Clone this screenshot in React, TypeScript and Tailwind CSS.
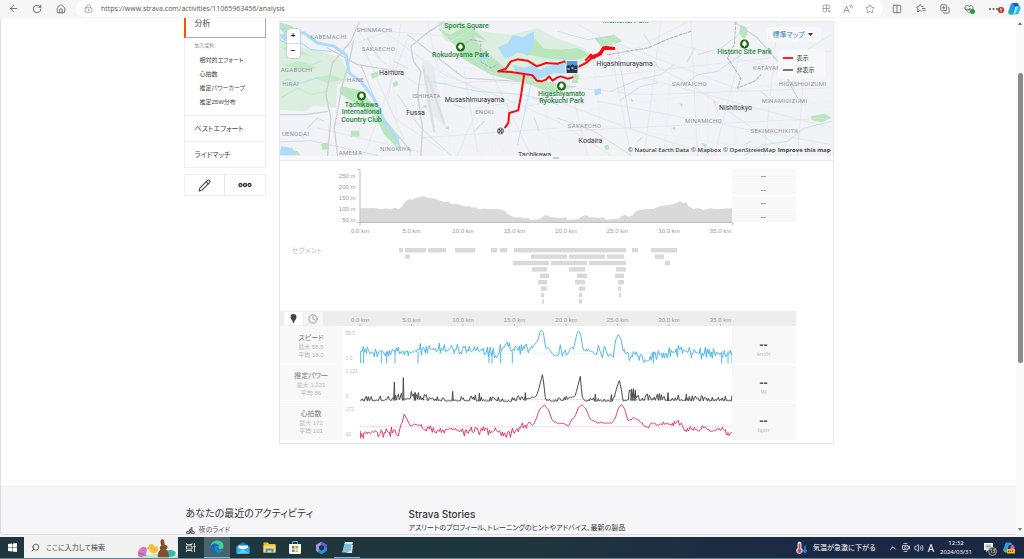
import type { ReactNode } from "react";
import { ArrowLeft, Bike, ChevronUp, Clock, Columns2, CopyPlus, Grid2x2Plus, HeartPulse, House, LockKeyhole, Pencil, RotateCw, Search, Star, Volume2 } from "lucide-react";

type Point = [x: number, y: number, noise?: number];

const kmTicks = [0, 5, 10, 15, 20, 25, 30, 35];

const elevation =
  "247,145 290,144 305,148 325,145 332,148 352,144 362,147 373,139 382,124 390,120 396,116 402,120 412,114 425,111 438,108 447,113 462,115 480,119 490,123 500,127 510,125 520,132 535,131 550,136 565,140 575,138 582,143 592,142 602,148 620,146 640,148 660,147 680,152 690,163 705,171 720,172 728,171 738,176 748,172 757,180 786,177 796,169 806,165 816,171 836,173 856,173 864,172 869,179 901,177 914,168 924,165 934,172 966,173 976,172 983,179 1021,176 1031,168 1041,164 1051,170 1064,165 1074,153 1096,148 1126,147 1146,139 1186,133 1206,124 1216,129 1226,127 1231,138 1246,147 1261,144 1276,150 1296,145 1316,148 1362,144";

// [start, end] of every segment, one list per lane
const segments = [
  [[39, 43], [45, 66], [68, 86], [95, 115], [131, 137], [140, 147], [154, 266], [272, 278], [291, 317]],
  [[45, 50], [171, 207], [209, 245], [247, 264], [295, 304]],
  [[153, 189], [191, 227], [229, 266], [305, 310]],
  [[172, 187], [209, 225], [256, 266]],
  [[180, 189], [217, 227], [255, 264]],
  [[178, 187], [215, 225], [258, 264]],
  [[181, 187], [219, 225], [258, 261]],
  [[181, 184], [219, 222], [259, 261]],
  [[182, 184], [219, 222]],
];

const speed: Point[] = [
  [247, 132, 10], [400, 130, 9], [440, 122, 11], [550, 125, 9], [610, 128, 6], [640, 136, 12], [665, 132, 14], [685, 106, 4], [700, 130, 12],
  [740, 122, 8], [750, 126, 12], [765, 115, 3], [780, 98, 1], [785, 75, 1], [790, 66, 0], [796, 74, 0], [803, 120, 2], [812, 120, 2], [826, 141, 3],
  [841, 143, 2], [847, 110, 0], [853, 142, 2], [862, 125, 1], [866, 142, 3], [876, 125, 3], [888, 118, 2], [896, 80, 1], [902, 67, 0], [908, 80, 0],
  [916, 130, 2], [928, 124, 3], [946, 138, 3], [956, 140, 2], [961, 112, 1], [973, 150, 3], [979, 115, 1], [988, 138, 4], [1006, 140, 8], [1013, 95, 1],
  [1021, 80, 0], [1030, 95, 1], [1035, 130, 2], [1046, 128, 6], [1056, 148, 12], [1073, 132, 14], [1091, 148, 9], [1126, 145, 9], [1156, 137, 8],
  [1181, 135, 12], [1216, 125, 9], [1246, 136, 12], [1316, 134, 9], [1363, 140, 7],
];
const speedDips = [248, 257, 310, 326, 351, 420, 633, 642, 668, 703, 1126, 1331, 1350, 1362];

const power: Point[] = [
  [247, 276, 14], [350, 274, 14], [400, 268, 18], [440, 274, 16], [500, 276, 12], [560, 275, 17], [640, 276, 12], [700, 277, 10], [735, 272, 18],
  [765, 266, 4], [775, 262, 4], [783, 238, 0], [794, 193, 0], [798, 232, 0], [803, 274, 2], [830, 277, 8], [860, 274, 10], [891, 262, 3], [896, 245, 1],
  [907, 202, 0], [912, 262, 0], [920, 276, 2], [945, 276, 12], [1006, 277, 10], [1012, 252, 1], [1019, 228, 0], [1024, 215, 0], [1029, 235, 0],
  [1035, 276, 1], [1052, 277, 8], [1055, 266, 36], [1076, 266, 32], [1080, 274, 16], [1180, 274, 18], [1250, 276, 14], [1363, 275, 14],
];
const powerPeaks: Record<number, number> = { 349: 222, 376: 209, 411: 253, 524: 250, 604: 256, 742: 254, 952: 258, 1000: 260, 1060: 244, 1066: 242, 1072: 246, 1170: 254, 1225: 258, 1362: 264 };

const heart: Point[] = [
  [247, 372, 16], [255, 382, 8], [262, 371, 8], [340, 372, 10], [355, 370, 6], [360, 390, 1], [368, 350, 2], [374, 340, 1], [378, 315, 0], [390, 340, 2],
  [400, 352, 3], [415, 347, 3], [428, 350, 3], [435, 362, 6], [460, 362, 8], [470, 372, 8], [520, 360, 9], [560, 372, 8], [600, 370, 10], [620, 365, 10],
  [680, 375, 8], [700, 375, 8], [730, 352, 8], [745, 350, 7], [756, 340, 2], [765, 353, 3], [775, 330, 2], [785, 302, 1], [799, 290, 0], [812, 305, 0],
  [822, 335, 1], [836, 345, 3], [864, 346, 4], [869, 357, 2], [878, 338, 2], [891, 325, 1], [901, 298, 0], [912, 290, 0], [923, 300, 0], [936, 332, 1],
  [956, 342, 2], [1001, 345, 2], [1011, 332, 1], [1021, 300, 0], [1031, 288, 0], [1040, 302, 0], [1050, 338, 2], [1066, 328, 2], [1081, 335, 4],
  [1096, 350, 4], [1111, 358, 3], [1121, 342, 3], [1141, 350, 5], [1206, 342, 5], [1221, 365, 4], [1246, 362, 7], [1270, 367, 4], [1275, 350, 4],
  [1296, 370, 4], [1331, 362, 4], [1351, 374, 6], [1363, 372, 5],
];

function wobble(n: number) {
  const v = Math.sin(n * 127.1) * 43758.5453;
  return (v - Math.floor(v)) * 2 - 1;
}

function trace(points: Point[], kind: "both" | "up", seed: number) {
  const out: string[] = [];
  let i = 0;
  for (let x = points[0][0]; x <= 1363; x += 3) {
    while (i < points.length - 2 && points[i + 1][0] < x) i++;
    const [x0, y0, n0 = 0] = points[i];
    const [x1, y1, n1 = 0] = points[i + 1];
    const t = (x - x0) / (x1 - x0);
    const w = wobble(x + seed);
    const noise = n0 + (n1 - n0) * t;
    const offset = kind === "up" ? -Math.max(0, w) * noise * 1.2 + 3 : w * Math.abs(w) * noise * 1.8;
    out.push(`${x},${(y0 + (y1 - y0) * t + offset).toFixed(1)}`);
  }
  return out.join(" ");
}

const charts = [
  { name: "スピード", max: "最大 55.5", avg: "平均 18.0", top: "55.5", bottom: "0.0", unit: "km/h", color: "#52b7e8", box: "246 57 1116 111", mean: 136, line: trace(speed, "both", 3), spikes: speedDips.map((x) => `M${x} 130V166`).join("") },
  { name: "推定パワー", max: "最大 1,221", avg: "平均 86", top: "1,221", bottom: "0", unit: "W", color: "#4a4a4a", box: "246 171 1116 111", mean: 275, line: trace(power, "up", 11), spikes: Object.entries(powerPeaks).map(([x, y]) => `M${Number(x) - 2} 278L${x} ${y}L${Number(x) + 2} 278`).join("") },
  { name: "心拍数", max: "最大 172", avg: "平均 101", top: "172", bottom: "60", unit: "bpm", color: "#e6396f", box: "246 284 1116 111", mean: 355, line: trace(heart, "both", 7), spikes: "M247 368V390M256 375V391M1350 370V381" },
];

const districts: [string, number, number][] = [
  ["SHINMACHI", 95, 10], ["KABEMACHI", 49, 17], ["SAKAECHO", 99, 29], ["AGABUCHI", 17, 50], ["HIRAI", 11, 64], ["HANE", 76, 60],
  ["ISHIHATA", 147, 76], ["ENOKI", 205, 92], ["UENODAI", 16, 114], ["NINOMIYA", 116, 129], ["AMEMA", 71, 133], ["SAIWAICHO", 410, 64],
  ["KATAYAMA", 490, 48], ["HIGASHIOIZUMI", 523, 64], ["MINAMIOIZUMI", 505, 81], ["MINAMICHO", 424, 101], ["SAKAECHO", 305, 106], ["SEKIMACHIKITA", 495, 111],
];
const cities: [string, number, number][] = [
  ["Hamura", 112, 53], ["Musashimurayama", 195, 80], ["Fussa", 136, 93], ["Higashimurayama", 345, 44], ["Nishitokyo", 456, 88], ["Kodaira", 311, 121], ["Tachikawa", 255, 135],
];
const parks: [string, number, number][] = [
  ["Sports Square", 187, 6], ["Rokudoyama Park", 181, 35], ["Tachikawa", 82, 85], ["International", 82, 92], ["Country Club", 82, 100],
  ["Higashiyamato", 282, 74], ["Ryokuchi Park", 282, 81], ["Historic Site Park", 465, 32], ["Memorial Park", 346, 1],
];
const trees = [[82, 74], [181, 25], [282, 64], [465, 22]];

function RideMap() {
  return (
    <svg viewBox="0 0 554 134" preserveAspectRatio="xMidYMid slice" className="block h-[134px] w-full bg-[#f2f3f7] font-['Roboto',sans-serif]" role="img" aria-label="ライドマップ">
      <g transform="translate(-2 -4) scale(.3334)" fill="none" strokeLinecap="round" strokeLinejoin="round">
        <g fill="#dbeee0">
          <path d="M0 60L60 85L125 100L190 120L212 160L210 190L180 200L175 270L110 262L85 280L0 275Z" />
          <path d="M480 10L560 12L610 40L700 50L780 30L835 60L920 90L955 130L900 150L780 185L690 170L620 150L560 90L500 65Z" />
        </g>
        <g fill="#b9e6bd">
          <path d="M480 30L520 50L570 20L630 70L590 55L610 90L660 130L700 165L735 170L850 200L900 205L820 225L760 200L700 185L640 170L560 125L530 80Z" />
          <path d="M190 205L245 215L270 240L310 290L330 330L365 360L355 385L320 350L290 290L240 262L185 225Z" />
          <path d="M700 100L735 90L770 60L800 92L850 95L900 90L940 110L890 130L800 120Z" />
          <path d="M10 85L60 95L110 115L70 112L30 105ZM15 140L70 130L120 150L80 158ZM110 180L160 170L200 185L150 195Z" opacity=".6" />
          <path d="M0 10L45 25L60 60L20 50ZM30 392L60 400L70 412L20 412ZM130 378l20-4 5 18-20 4ZM220 338h26v18h-26ZM280 168l20-8 4 14-20 8ZM345 195l14-6 4 12-14 6ZM430 268l15-8 4 10ZM500 330l12-6 4 12Z" />
          <path d="M1390 20l16 8 4 20-12 18-14-22ZM1500 118l30 4 20 12-30-2ZM1600 295l40-8 22 12-30 14-30-6ZM885 160l20 10-5 25-18 0ZM950 60l60-10 24 20-60 20ZM1205 255l12 5-6 8ZM980 383l12-4 4 14-12 4ZM1270 375l18 4-4 12ZM1060 240l8 8-6 4ZM1180 330l12-3 2 9Z" />
        </g>
        <g stroke="#c4e9cb" strokeWidth="3">
          <path d="M20 150l40-20 30 15 40-15M10 240l50-30 40 20 50-10M90 330l30-30 20 10M270 60l20 40 18 20M350 130l40 20M450 200l30 25M530 260l30 10M590 340l30-30M690 260l10 60M770 300l15 40M1100 50l20 30M1250 90l-20 40M1310 250l10 30M1130 130l14 20M1450 220l20 18M1530 180l20 30M1400 380l20-10M1080 370l14-12" />
        </g>
        <g stroke="#dfe2e9" strokeWidth="2">
          <path d="M0 120L170 100L330 40L560 60M230 20L300 120L420 200L640 190L840 205L1100 230L1660 210M250 70L350 300L500 400M290 20L500 170L700 250L840 310L1000 412M450 12L480 150L700 270L840 250L1050 330L1300 412M560 160L600 400M620 120L760 412M700 200L1000 130L1230 12M860 130L930 412M1000 100L1060 412M1150 12L1100 412M1240 12L1260 412M1400 60L1310 412M1500 12L1460 412M1580 150L1560 412M840 190L1660 100M840 340L1660 300M960 250L1660 380M1000 70L1400 220M1100 180L1660 330M390 60L260 412M370 20L330 250L400 412M540 412L600 270L850 230M120 330L420 400M430 360L840 330M520 70L620 12M900 20L1240 200L1540 412M1240 90L1500 150L1660 50" />
        </g>
        <g stroke="#e8eaf0" strokeWidth="1">
          <path d="M240 90L840 200M260 120L840 260M280 200L620 412M330 60L370 400M420 90L690 412M500 180L520 412M560 200L840 370M630 240L840 240M660 200L640 412M800 210L820 412M950 150L980 412M1080 150L1220 412M1130 60L1660 210M1180 140L1160 412M1220 300L1660 250M1290 50L1290 390M1350 110L1380 412M1430 90L1530 400M1540 60L1610 400M900 280L1630 180M880 310L1500 400M960 40L1660 270" />
        </g>
        <path d="M435 130L470 145L478 210L505 330L450 280Z" fill="#e8eaf0" />
        <path d="M437 145L470 340M450 175L500 315" stroke="#dcdee6" strokeWidth="7" />
        <g stroke="#cdd0d8" strokeWidth="4">
          <path d="M245 12L220 70L165 135L145 230L160 300L150 412M228 70L215 130L195 200L170 330L180 412M150 90L240 140L360 160M0 290L85 290L150 280M500 12L455 40L400 85L408 130L430 160L420 230L435 330L430 412" />
          <path d="M1370 12L1440 60L1500 130L1560 240M250 140L310 290L400 400M390 50L560 180L720 190" strokeWidth="3" />
          <path d="M0 372L100 368L200 390L300 412M1020 90L1040 210L1060 330M840 300L950 340L1060 412" strokeWidth="2" />
        </g>
        <g stroke="#b0b3bd" strokeWidth="3" strokeDasharray="9 5">
          <path d="M565 75L580 65L610 70L608 130L640 150L660 140M990 110L1050 100L1110 90L1180 60L1240 40M1375 12L1370 80L1350 120L1390 180L1380 210L1430 190L1450 170" />
        </g>
        <g stroke="#acdcf8" strokeWidth="4">
          <path d="M0 60L30 80L50 60L100 95L160 100" />
          <path d="M0 25L25 40L80 45L120 75L170 85L205 110L215 165L250 190L285 235L300 260L320 310L355 355L365 385" strokeWidth="9" />
          <path d="M0 195l30-10 40 10 50-15M10 345l40-5 30 20M360 230L430 330L520 412M840 260l-100-30-140-10-140-30M1000 220l80-35 70-15 40-30M1030 245l60-40 50-10M840 40l90 25 70-10M1400 412L1460 380L1530 370L1580 330L1662 310M1260 110l70-20 80-60M1220 200l40-30 60-10 70-50M780 140l-20 60-40 180" strokeWidth="2" />
        </g>
        <g fill="#aeddfb">
          <path d="M662 88L690 75L705 52L735 58L770 40L768 80L750 115L725 98L705 115L680 120Z" />
          <path d="M706 140L740 150L765 140L785 155L840 135L875 140L880 170L830 165L780 185L745 165L720 170Z" />
          <path d="M600 120l25-14 15 12-30 10ZM0 48l45 2 15 22-40-4ZM10 385l35 5 10 22H6ZM950 215l20-4 0 16-18 6Z" />
        </g>
        <g stroke="#fa0a14" strokeWidth="6">
          <path d="M683 328L692 315L695 285L722 277L730 235L740 168L700 162L662 160L685 152L700 130L720 124L750 128L778 145L805 135L840 137L862 130L880 155L905 145L925 135L940 122L963 112L980 92L1010 92L985 87L970 100L950 120L940 110L925 126" />
          <path d="M740 168L765 172L778 188L792 190L805 185L815 175L825 188L840 178L850 175L870 182L885 178" />
          <path d="M940 118L968 108L978 90L1008 91" strokeWidth="10" />
        </g>
      </g>
      <g textAnchor="middle">
        <g className="fill-[#8e939c] text-[6px] tracking-wider">
          {districts.map(([name, x, y], i) => <text key={i} x={x} y={y}>{name}</text>)}
        </g>
        <g className="fill-[#333842] text-[7px]">
          {cities.map(([name, x, y]) => <text key={name} x={x} y={y}>{name}</text>)}
        </g>
        <g className="fill-[#26883c] text-[7px] font-medium">
          {parks.map(([name, x, y]) => <text key={name} x={x} y={y}>{name}</text>)}
        </g>
      </g>
      {trees.map(([x, y]) => (
        <g key={x} transform={`translate(${x} ${y})`}>
          <circle r="4.5" fill="#1c6b12" />
          <path d="M0-3.2C2-1.8 2.4-.6 2.2.5 2 1.6 1 1.7.4 1.7V3H-.4V1.7C-1 1.7-2 1.6-2.2.5-2.4-.6-2-1.8 0-3.2Z" fill="#fff" />
        </g>
      ))}
      <g transform="translate(221 109)">
        <circle r="3" fill="#fff" stroke="#444" strokeWidth=".8" />
        <path d="M-2-2h1.4v1.4H-2ZM.6-2H2v1.4H.6ZM-.7-.7H.7V.7H-.7ZM-2 .6h1.4V2H-2ZM.6.6H2V2H.6Z" fill="#333" />
      </g>
      <g transform="translate(286 38)">
        <path d="M0 0h13v14H0Z" fill="#fff" />
        <path d="M1 1h11v7H1Z" fill="#4c9be0" />
        <path d="M1 6l2-1 2 1 2-2 2 2 3-1v8H1Z" fill="#243a4c" />
        <path d="M2 8h2v2H2ZM6 7h2v2H6ZM9 9h2v1H9Z" fill="#8fb4c4" />
      </g>
    </svg>
  );
}

function KmAxis({ ticks = false }: { ticks?: boolean }) {
  return (
    <svg viewBox="0 0 372 15" className="h-[15px] w-full overflow-visible">
      {kmTicks.map((km, i) => (
        <g key={km}>
          <text x={i * 51.5} y={ticks ? 11 : 10} textAnchor="middle" className="fill-[#999] text-[6px]">{km}.0 km</text>
          {ticks && <path d={`M${i * 51.5} 13v2`} stroke="#bbb" />}
        </g>
      ))}
    </svg>
  );
}

function IconButton({ label, className = "", children }: { label: string; className?: string; children: ReactNode }) {
  return (
    <button type="button" aria-label={label} className={`flex shrink-0 items-center justify-center ${className}`}>
      {children}
    </button>
  );
}

function BrowserBar() {
  return (
    <header className="flex h-[17px] shrink-0 items-center bg-[#f6f6f6] text-[#666]">
      <IconButton label="戻る" className="ml-1 w-[18px]"><ArrowLeft size={11} strokeWidth={2} /></IconButton>
      <IconButton label="更新" className="ml-1.5 w-[18px]"><RotateCw size={10} strokeWidth={2.2} /></IconButton>
      <IconButton label="ホーム" className="ml-1.5 w-[18px]"><House size={10} strokeWidth={2.2} /></IconButton>
      <div className="ml-1.5 flex h-full min-w-0 flex-1 items-center rounded-full bg-white pl-2 text-[#888]">
        <LockKeyhole size={9} strokeWidth={1.8} className="shrink-0" />
        <input
          aria-label="アドレス"
          defaultValue="https://www.strava.com/activities/11065963456/analysis"
          className="ml-2 min-w-0 flex-1 bg-transparent font-['Open_Sans',sans-serif] text-[7px] leading-[15px] text-[#555] outline-none"
        />
        <IconButton label="アプリ" className="w-[22px]"><Grid2x2Plus size={9} strokeWidth={1.8} /></IconButton>
        <IconButton label="音声で読み上げる" className="w-[22px]">
          <svg width="10" height="10" viewBox="0 0 20 20" fill="none" stroke="currentColor" strokeWidth="1.6"><path d="M1 18L7 4l6 14M3 13h8M13 2q3 2 2 5M16 1q4 3 2 8" /></svg>
        </IconButton>
        <IconButton label="お気に入りに追加" className="mr-0.5 w-[22px]"><Star size={10} strokeWidth={1.8} /></IconButton>
      </div>
      <IconButton label="画面を分割" className="ml-0.5 w-[24px]"><Columns2 size={10} strokeWidth={2} /></IconButton>
      <IconButton label="お気に入り" className="w-[24px]">
        <svg width="10" height="10" viewBox="0 0 20 20" fill="none" stroke="currentColor" strokeWidth="1.8" strokeLinejoin="round"><path d="M11 14.500L8 13l-5 3 1-6-3-4 5-1 2.500-4L11 5l4 .5M12 9h7M13 13h6" /></svg>
      </IconButton>
      <IconButton label="コレクション" className="w-[24px]"><CopyPlus size={10} strokeWidth={2} className="-scale-100" /></IconButton>
      <IconButton label="ブラウザーのエッセンシャル" className="relative w-[24px]">
        <HeartPulse size={10} strokeWidth={2} />
        <span className="absolute right-[6px] bottom-0 size-[5px] rounded-full bg-[#2b9a3e]" />
      </IconButton>
      <IconButton label="設定など" className="relative h-full w-[26px]">
        <svg width="10" height="10" viewBox="0 0 10 10" fill="#444"><circle cx="1" cy="5" r=".9" /><circle cx="4.5" cy="5" r=".9" /><circle cx="8" cy="5" r=".9" /></svg>
        <span className="absolute top-[7px] right-[3px] flex size-[6px] items-center justify-center rounded-full bg-[#d02020]">
          <svg width="4" height="4" viewBox="0 0 4 4" stroke="#fff" fill="none" strokeWidth=".8"><path d="M2 4V.5M.7 1.8L2 .5l1.3 1.3" /></svg>
        </span>
      </IconButton>
      <IconButton label="Copilot" className="mr-[3px] w-[14px]">
        <svg width="13" height="13" viewBox="0 0 26 26">
          <path d="M9 2h8q3 0 4 4l1 3h-7l-3 13q-1 3-4 3H5q-5 0-4-6L5 6q1-4 4-4Z" fill="#1a9ce8" />
          <path d="M9 2h8q3 0 4 4l1 3h-8l-3-4q-1-3-2-3Z" fill="#1258b8" />
          <path d="M22 8q4 0 3 6l-3 7q-1 4-5 4H9q3-1 4-4l3-9q1-4 6-4Z" fill="#27c4d8" />
          <path d="M17 9h3l-4 12q-1 3-4 4-2 0-1-3Z" fill="#fff" opacity=".5" />
          <path d="M1 17q1 4 7 4h4q-1 4-4 4H5q-5 0-4-8Z" fill="#38b878" />
        </svg>
      </IconButton>
    </header>
  );
}

function Sidebar() {
  return (
    <aside className="w-[82px] shrink-0 text-[#444]">
      <nav>
        <a href="#analysis" className="flex h-5 items-start border-r border-b border-l-2 border-[#aaa] border-l-[#fc5200] pl-[9px] text-[8px] leading-3">分析</a>
        <div className="border-x border-b border-[#eee] pt-[3px] pb-1.5 pl-[10px]">
          <p className="text-[5px] leading-[8px] text-[#888]">加入契約</p>
          <ul className="pt-1 pl-[5px] text-[6px] leading-[14px]">
            {["相対的エフォート", "心拍数", "推定パワーカーブ", "推定25W分布"].map((item) => (
              <li key={item}><a href="#item" className="block">{item}</a></li>
            ))}
          </ul>
        </div>
        {["ベストエフォート", "ライドマッチ"].map((item) => (
          <a key={item} href="#item" className="block h-[26px] border-x border-b border-[#eee] pl-[10px] text-[7px] leading-[25px]">{item}</a>
        ))}
      </nav>
      <div className="mt-1.5 flex h-[22px] divide-x divide-[#e5e5e5] border border-[#eee]">
        <IconButton label="編集" className="flex-1"><Pencil size={13} strokeWidth={2} /></IconButton>
        <IconButton label="その他" className="flex-1">
          <svg width="14" height="6" viewBox="0 0 14 6" fill="none" stroke="#333" strokeWidth="1.3"><circle cx="2.5" cy="3" r="1.5" /><circle cx="7" cy="3" r="1.5" /><circle cx="11.5" cy="3" r="1.5" /></svg>
        </IconButton>
      </div>
    </aside>
  );
}

function MapPanel() {
  return (
    <div className="relative">
      <RideMap />
      <div className="absolute top-1.5 left-1.5 flex w-[15px] flex-col divide-y divide-[#ddd] rounded-sm border border-[#ccc] bg-white text-[8px] leading-[14px] font-bold text-[#222]">
        <button type="button">+</button>
        <button type="button">−</button>
      </div>
      <div className="absolute top-[5px] right-[12px] flex h-[15px] w-[54px] items-center rounded-sm bg-[#f8f8fa]">
        <select aria-label="マップの種類" className="w-full appearance-none bg-transparent pl-[6px] text-[7px] leading-[15px] text-[#3c87b8] outline-none">
          <option>標準マップ</option>
        </select>
        <svg width="5" height="3" viewBox="0 0 5 3" className="pointer-events-none absolute right-[8px]"><path d="M0 0h5L2.5 3Z" fill="#333" /></svg>
      </div>
      <ul className="absolute top-[27px] right-[8px] w-[47px] rounded-sm bg-[#f8f8fa] py-[3px] pl-[5px] text-[6px] leading-3 text-[#333]">
        <li className="flex items-center gap-1"><span className="h-0.5 w-[10px] bg-[#ff2222]" />表示</li>
        <li className="flex items-center gap-1"><span className="h-0.5 w-[10px] bg-[#777]" />非表示</li>
      </ul>
      <p className="absolute right-0.5 bottom-0.5 flex gap-0.5 font-['Open_Sans',sans-serif] text-[6px] leading-[8px] font-semibold whitespace-nowrap text-[#444]">
        <a href="#earth">© Natural Earth Data</a>
        <a href="#mapbox">© Mapbox</a>
        <a href="#osm">© OpenStreetMap</a>
        <a href="#improve" className="font-bold">Improve this map</a>
      </p>
    </div>
  );
}

function Analysis() {
  return (
    <div className="pr-[37px] pb-[3px] text-[#999]">
      <div className="flex pt-[8px]">
        <div className="flex w-[76px] shrink-0 flex-col items-end pt-0.5 text-[6px] leading-[11px]">
          {[250, 200, 150, 100, 50].map((m) => <span key={m}>{m} m</span>)}
        </div>
        <div className="ml-1 min-w-0 flex-1">
          <svg viewBox="246 27 1116 162" className="block h-[54px] w-full overflow-visible">
            <path d={`M${elevation}V187H247Z`.replace(/ /g, "L")} fill="#d9d9d9" />
            <path d="M237 28H246V187M237 187H1363V196M246 187V196" fill="none" stroke="#bbb" strokeWidth="3" />
          </svg>
          <KmAxis />
        </div>
        <ul className="w-16 shrink-0 text-center text-[8px] leading-[13px] font-bold text-[#888]">
          {[0, 1, 2, 3].map((i) => <li key={i} className="mb-px h-[12px] bg-[#f8f8f8] odd:h-[13px]">--</li>)}
        </ul>
      </div>
      <div className="flex pt-[9px] pb-[6px]">
        <h3 className="w-20 shrink-0 pl-3 text-[7px] leading-[8px] text-[#bbb]">セグメント</h3>
        <svg viewBox="0 0 372 58" className="h-[58px] min-w-0 flex-1" fill="#d9d9d9">
          {segments.map((lane, row) => lane.map(([from, to]) => <rect key={`${row}-${from}`} x={from} y={1 + row * 6.4} width={to - from} height="4.4" />))}
        </svg>
        <div className="w-16 shrink-0" />
      </div>
      <div className="flex h-[15px] bg-[#ededed]">
        <div className="flex w-20 shrink-0 gap-px py-px pl-1">
          <IconButton label="距離" className="w-[19px] bg-white">
            <svg width="7" height="9" viewBox="0 0 14 18" fill="#444"><path d="M7 0q6 0 6 6 0 4-4 8l-1 4H6l-1-4Q1 10 1 6q0-6 6-6Z" /></svg>
          </IconButton>
          <IconButton label="時間" className="w-[19px] bg-[#f7f7f7]"><Clock size={10} strokeWidth={2.4} /></IconButton>
        </div>
        <div className="min-w-0 flex-1"><KmAxis ticks /></div>
        <div className="w-16 shrink-0" />
      </div>
      <div className="flex flex-col gap-px pt-px">
        {charts.map((c) => (
          <section key={c.name} className="flex h-[37px]">
            <div className="w-[63px] shrink-0 bg-[#f8f8f8] pt-[6px] text-center text-[6px] leading-[8px] text-[#b5b5b5]">
              <h3 className="text-[7px] leading-[10px] text-[#777]">{c.name}</h3>
              <p>{c.max}</p>
              <p>{c.avg}</p>
            </div>
            <div className="flex w-[17px] shrink-0 flex-col justify-between py-0.5 pl-[3px] text-[5px] leading-[8px] text-[#bbb]">
              <span>{c.top}</span>
              <span>{c.bottom}</span>
            </div>
            <svg viewBox={c.box} className="h-[37px] min-w-0 flex-1" fill="none" stroke={c.color} strokeLinejoin="round">
              <path d={`M247 ${c.mean}H1362`} strokeWidth="2" strokeDasharray="6 3" opacity=".4" />
              <polyline points={c.line} strokeWidth="3" />
              <path d={c.spikes} strokeWidth="3" />
            </svg>
            <div className="w-16 shrink-0 bg-[#f8f8f8] pt-[13px] text-center text-[6px] leading-[8px] text-[#bbb]">
              <p className="text-[12px] leading-[10px] font-bold text-[#555]">--</p>
              <p>{c.unit}</p>
            </div>
          </section>
        ))}
      </div>
    </div>
  );
}

function PageFooter() {
  return (
    <footer className="min-h-0 flex-1 overflow-hidden border-t border-[#eee] bg-[#f6f6f9] pt-5">
      <div className="mx-auto flex max-w-[650px] pl-0.5 text-[#333]">
        <section className="w-[223px] shrink-0">
          <h2 className="text-[10px] leading-[14px]">あなたの最近のアクティビティ</h2>
          <a href="#ride" className="flex items-center gap-1 pt-1 text-[7px] leading-[10px] text-[#555]"><Bike size={9} strokeWidth={3} />夜のライド</a>
        </section>
        <section>
          <h2 className="font-['Inter',sans-serif] text-[10px] leading-[14px] font-medium">Strava Stories</h2>
          <p className="pt-0.5 text-[7px] leading-[9px] whitespace-nowrap">アスリートのプロフィール、トレーニングのヒントやアドバイス、最新の製品</p>
        </section>
      </div>
    </footer>
  );
}

function Taskbar() {
  return (
    <footer className="flex h-[22px] shrink-0 items-center border-b border-[#6a8592] bg-linear-to-r from-[#20363d] from-50% to-[#1b2844] to-80% text-white">
      <IconButton label="スタート" className="w-6">
        <svg width="9" height="9" viewBox="0 0 18 18" fill="#fff"><path d="M0 2l8-1v7.500H0ZM9 1l9-1v8.500H9ZM0 9.500h8V17l-8-1ZM9 9.500h9V18l-9-1Z" /></svg>
      </IconButton>
      <div className="flex h-full w-[154px] shrink-0 items-center bg-[#f1f1f1] pl-[7px] text-[#444]">
        <Search size={9} strokeWidth={2} className="shrink-0 -scale-x-100" />
        <input aria-label="検索" placeholder="ここに入力して検索" className="ml-1.5 min-w-0 flex-1 bg-transparent text-[7px] leading-[14px] outline-none placeholder:text-[#444]" />
        <svg width="42" height="20" viewBox="0 0 126 60" className="shrink-0 self-end">
          <path d="M0 60Q60 42 126 50V60Z" fill="#c3e8c0" />
          <ellipse cx="19" cy="42" rx="12" ry="17" fill="#dd78b4" transform="rotate(35 19 42)" />
          <path d="M9 45l22 8" stroke="#8c6bd0" strokeWidth="4" />
          <ellipse cx="104" cy="46" rx="15" ry="10" fill="#35b9b3" />
          <path d="M38 28q-2-10 8-10 8 0 9 9l10-3q4 15-6 21-18 6-21-17Z" fill="#ffbd35" />
          <path d="M37 27l-5 4 7 1Z" fill="#e87820" />
          <path d="M78 3q8 1 8 17l7 3q5 6-3 11 10 7 9 24H66q-4-12 7-23-4-7 3-13Q70 8 78 3Z" fill="#81502f" />
        </svg>
      </div>
      <IconButton label="タスクビュー" className="w-[26px]">
        <svg width="10" height="9" viewBox="0 0 20 18" fill="none" stroke="#fff" strokeWidth="1.600"><path d="M1 0v3h11V0M1 6h11v6H1ZM1 18v-3h11v3M17 0v18M15 7h4" /></svg>
      </IconButton>
      <IconButton label="Microsoft Edge" className="h-full w-[26px] border-b border-[#76b9ed] bg-[#4b646c]">
        <svg width="14" height="14" viewBox="0 0 28 28">
          <circle cx="14" cy="14" r="13" fill="#168bd2" />
          <path d="M1 14Q2 1 15 1q12 1 12 11 0 6-7 7-6 0-4-3 2-5-3-7Q5 7 1 14Z" fill="#43cf91" />
          <path d="M1 13Q4 6 11 7q7 1 7 6Q11 9 9 16q0 8 8 10Q4 29 1 18Z" fill="#1469b8" />
          <path d="M17 13q-1 5 4 6l5-2q-6 7-12 2-1-3 3-6Z" fill="#4b646c" />
        </svg>
      </IconButton>
      <IconButton label="メール" className="w-[26px]">
        <svg width="14" height="12" viewBox="0 0 28 24"><path d="M1 8L14 0l13 8v15H1Z" fill="#1477c8" /><path d="M4 7h20v8H4Z" fill="#e9f6fd" /><path d="M1 9l13 8L27 9v14H1Z" fill="#31a9eb" /><path d="M1 23l13-8 13 8Z" fill="#63cdfa" /></svg>
      </IconButton>
      <IconButton label="エクスプローラー" className="w-[26px]">
        <svg width="13" height="11" viewBox="0 0 26 22"><path d="M1 1h9l2 3h13v17H1Z" fill="#f4b92c" /><path d="M1 7h24v14H1Z" fill="#ffda68" /><path d="M5 13h16v8h-4v-4H9v4H5Z" fill="#3898d8" /></svg>
      </IconButton>
      <IconButton label="Microsoft Store" className="w-[26px]">
        <svg width="12" height="13" viewBox="0 0 24 26"><path d="M7 7V1h10v6" fill="none" stroke="#4ab9ea" strokeWidth="2" /><path d="M0 6h24v17q0 3-3 3H3q-3 0-3-3Z" fill="#f8f8f8" /><path d="M6 10h5v5H6Z" fill="#f05024" /><path d="M13 10h5v5h-5Z" fill="#7cb928" /><path d="M6 17h5v5H6Z" fill="#22a2e8" /><path d="M13 17h5v5h-5Z" fill="#fcb813" /></svg>
      </IconButton>
      <IconButton label="Microsoft 365" className="w-[26px]">
        <svg width="13" height="13" viewBox="0 0 26 26" fill="none" strokeWidth="6" strokeLinejoin="round"><path d="M14 4L5 9v9l3 3" stroke="#a98bea" /><path d="M12 4l9 5v6" stroke="#5a62df" /><path d="M21 14v4l-8 5-6-4" stroke="#2a8fe0" /></svg>
      </IconButton>
      <IconButton label="メモ帳" className="h-full w-[26px] border-b border-[#76b9ed]">
        <svg width="13" height="13" viewBox="0 0 26 26"><path d="M8 2h16l-5 21H2Z" fill="#83c5db" /><path d="M8 2h16l-1 4H7Z" fill="#d8e7eb" /><path d="M21 8l3 0-2 16H9l10-4Z" fill="#dbe5e8" /><path d="M9 9h9M8 13h9M7 17h9" stroke="#6aafc8" strokeWidth="1" /></svg>
      </IconButton>
      <div className="flex-1" />
      <button type="button" className="flex items-center gap-1.5 pr-[10px] text-[7px] leading-[10px] whitespace-nowrap [font-feature-settings:normal]">
        <svg width="11" height="13" viewBox="0 0 22 26"><path d="M3 5q0-4 4-4t4 4v9q4 3 2 8-3 4-6 4-4 0-6-4-2-5 2-8Z" fill="#b8d8f7" /><circle cx="7" cy="20" r="4" fill="#e74343" /><path d="M7 6v13" stroke="#e74343" strokeWidth="3" /><path d="M18 9v13M14 18l4 5 4-5" fill="none" stroke="#2483dc" strokeWidth="3" /></svg>
        気温が急激に下がる
      </button>
      <IconButton label="隠れているインジケーター" className="w-[13px]"><ChevronUp size={10} strokeWidth={2} /></IconButton>
      <IconButton label="今すぐ会議" className="w-[13px]">
        <svg width="8" height="9" viewBox="0 0 16 18" fill="none" stroke="#fff" strokeWidth="1.300"><path d="M3 1h8M1 5h11v8H1ZM12 8l3-2v6l-3-2M3 17h8" /><circle cx="6.500" cy="9" r="2" /></svg>
      </IconButton>
      <IconButton label="音量" className="w-[13px]"><Volume2 size={10} strokeWidth={1.8} /></IconButton>
      <span className="w-[12px] text-center font-['Open_Sans',sans-serif] text-[10px] leading-[10px]">A</span>
      <div className="mx-0.5 w-[34px] text-center font-['Open_Sans',sans-serif] text-[6px] leading-[9px]">
        <p>12:32</p>
        <p>2024/03/31</p>
      </div>
      <IconButton label="通知" className="relative ml-1 h-full w-[18px]">
        <svg width="9" height="9" viewBox="0 0 18 18"><path d="M0 0h18v14H8l-4 4v-4H0Z" fill="#fff" /><path d="M3 4h12M3 7h12M3 10h8" stroke="#34465a" /></svg>
        <span className="absolute right-0 bottom-[2px] flex size-[9px] items-center justify-center rounded-full border border-[#999] bg-[#333] font-['Open_Sans',sans-serif] text-[5px] leading-none">13</span>
      </IconButton>
      <IconButton label="Copilot" className="mr-[9px] ml-1.5 w-[12px]">
        <svg width="12" height="12" viewBox="0 0 24 24"><path d="M7 1h8q3 0 4 5h-7L9 18q-1 3-5 3-4-1-3-7L4 5q1-4 3-4Z" fill="#269ee8" /><path d="M19 6q5 0 4 6l-2 6q-1 4-5 4H9q3-1 4-5l2-8q1-3 4-3Z" fill="#d95eb7" /><path d="M1 13q1 4 7 4l-1 4q-6 1-6-8Z" fill="#54c56c" /><path d="M8 14h16v9H8Z" fill="#f6bb22" /><path d="M11 17v3M15 17v3M19 17v3" stroke="#594318" strokeWidth="2" /></svg>
      </IconButton>
    </footer>
  );
}

export default function App() {
  return (
    <div className="flex h-screen flex-col overflow-hidden bg-[#f3f3f3] font-['Liberation_Sans','Noto_Sans_CJK_JP',sans-serif] [font-feature-settings:'palt']">
      <BrowserBar />
      <div className="mt-px mb-0.5 flex min-h-0 flex-1">
        <main className="flex min-w-0 flex-1 flex-col overflow-hidden rounded-l border-b border-l border-[#ddd] bg-white">
          <div className="mx-auto flex w-full max-w-[650px] shrink-0 gap-[13px] pb-[42px]">
            <Sidebar />
            <div className="mt-[3px] min-w-0 flex-1 border border-[#e6e6ec]">
              <MapPanel />
              <div className="flex h-[5px] items-center justify-center border-b border-[#e6e6ec] bg-[#f8f8fa]"><span className="h-0.5 w-1.5 bg-[#ccc]" /></div>
              <Analysis />
            </div>
          </div>
          <PageFooter />
        </main>
        <div className="flex w-2 shrink-0 flex-col items-center bg-[#fafafa] py-1">
          <svg width="4" height="3" viewBox="0 0 4 3" fill="#777"><path d="M0 3h4L2 0Z" /></svg>
          <div className="mt-[48px] h-[290px] w-[5px] rounded-full bg-[#8a8a8a]" />
          <svg width="4" height="3" viewBox="0 0 4 3" fill="#777" className="mt-auto"><path d="M0 0h4L2 3Z" /></svg>
        </div>
      </div>
      <Taskbar />
    </div>
  );
}
